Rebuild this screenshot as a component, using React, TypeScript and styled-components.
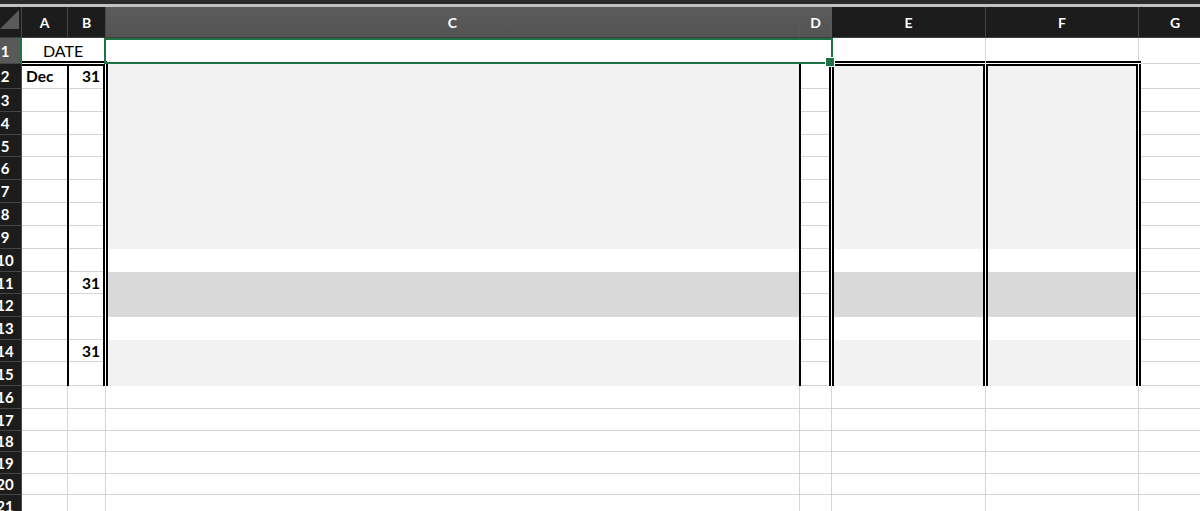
import React from 'react';
import styled, { createGlobalStyle, css } from 'styled-components';

const GRID = '#d4d4d4';
const LIGHT = '#f2f2f2';
const DARK = '#d9d9d9';
const GREEN = '#1f7246';

type Edge = 'none' | 'single' | 'double';

const GlobalStyle = createGlobalStyle`
  html, body { margin: 0; padding: 0; background: #fff; overflow: hidden; }
  body { font-family: Lato, "Open Sans", "Liberation Sans", sans-serif; }
`;

const Sheet = styled.div`
  width: 1200px;
  height: 511px;
  overflow: hidden;
  display: flex;
  flex-direction: column;
`;

const TopStrip = styled.div`
  flex: 0 0 7px;
  height: 7px;
  box-sizing: border-box;
  background: #2a2a2a;
  border-bottom: 3px solid #c2c2c2;
`;

const HeaderRow = styled.div`
  display: flex;
  flex: 0 0 31px;
  height: 31px;
  box-sizing: border-box;
  background: #1c1c1c;
  border-bottom: 1px solid #3e3e3e;
`;

const Corner = styled.div`
  flex: 0 0 22px;
  box-sizing: border-box;
  border-right: 1px solid #474747;
  display: flex;
  align-items: flex-end;
  justify-content: flex-end;
  padding: 0 2px 8px 0;
`;

const ColHeader = styled.div<{ $w: number; $sel?: boolean }>`
  flex: 0 0 ${(p) => p.$w}px;
  box-sizing: border-box;
  height: 100%;
  display: flex;
  align-items: center;
  justify-content: center;
  color: #fff;
  font-weight: 700;
  font-size: 14px;
  background: ${(p) => (p.$sel ? 'linear-gradient(#5b5b5b, #545454)' : 'transparent')};
  border-right: 1px solid ${(p) => (p.$sel ? '#5a5a5a' : '#474747')};
`;

const Row = styled.div<{ $h: number }>`
  display: flex;
  flex: 0 0 ${(p) => p.$h}px;
  height: ${(p) => p.$h}px;
`;

const RowHead = styled.div<{ $sel?: boolean }>`
  flex: 0 0 22px;
  box-sizing: border-box;
  overflow: hidden;
  display: flex;
  align-items: center;
  background: ${(p) => (p.$sel ? '#595959' : '#1c1c1c')};
  border-bottom: 1px solid #454545;
  border-right: ${(p) => (p.$sel ? `2px solid ${GREEN}` : '1px solid #4a4a4a')};
  color: #fff;
  font-weight: 700;
  font-size: 15px;
`;

const RowNum = styled.span`
  flex: 0 0 30px;
  margin-left: -10px;
  text-align: center;
`;

const vEdge = (e?: Edge) => {
  if (e === 'single')
    return css`
      &::after {
        content: '';
        position: absolute;
        z-index: 1;
        top: 0;
        bottom: -1px;
        right: -2px;
        width: 2px;
        background: #000;
      }
    `;
  if (e === 'double')
    return css`
      &::after {
        content: '';
        position: absolute;
        z-index: 1;
        top: 0;
        bottom: -1px;
        right: -3px;
        width: 5px;
        box-sizing: border-box;
        border-left: 2px solid #000;
        border-right: 2px solid #000;
        background: #fff;
      }
    `;
  return css``;
};

const hEdge = (e?: Edge, l = 0, r = 0) => {
  if (e === 'double')
    return css`
      &::before {
        content: '';
        position: absolute;
        z-index: 1;
        left: ${l}px;
        right: ${r}px;
        bottom: -3px;
        height: 5px;
        box-sizing: border-box;
        border-top: 2px solid #000;
        border-bottom: 2px solid #000;
        background: #fff;
      }
    `;
  return css``;
};

const Cell = styled.div<{
  $w: number;
  $fill?: string;
  $right?: Edge;
  $bottom?: Edge;
  $hl?: number;
  $hr?: number;
  $align?: 'left' | 'right' | 'center';
  $bold?: boolean;
}>`
  position: relative;
  box-sizing: border-box;
  flex: 0 0 ${(p) => p.$w}px;
  height: 100%;
  display: flex;
  align-items: center;
  justify-content: ${(p) =>
    p.$align === 'right' ? 'flex-end' : p.$align === 'center' ? 'center' : 'flex-start'};
  padding: 0 5px 0 4px;
  background: ${(p) => p.$fill ?? '#fff'};
  border-right: 1px solid ${(p) => p.$fill ?? GRID};
  border-bottom: 1px solid ${(p) => p.$fill ?? GRID};
  color: #000;
  font-size: ${(p) => (p.$bold ? '15.5px' : '16px')};
  font-weight: ${(p) => (p.$bold ? 700 : 400)};
  white-space: nowrap;
  ${(p) => vEdge(p.$right)}
  ${(p) => hEdge(p.$bottom, p.$hl, p.$hr)}
`;

const Selection = styled.div`
  position: absolute;
  z-index: 2;
  top: 0;
  left: -2px;
  right: -2px;
  bottom: -1px;
  border: 2px solid ${GREEN};
  pointer-events: none;
`;

const Handle = styled.div`
  position: absolute;
  right: -4px;
  bottom: -5px;
  width: 8px;
  height: 8px;
  background: ${GREEN};
  border: 1px solid #fff;
`;

const W = { A: 46, B: 38, C: 694, D: 32, E: 154, F: 153, G: 73 };
const COLS: Array<keyof typeof W> = ['A', 'B', 'C', 'D', 'E', 'F', 'G'];
const ROW_H = [26, 25, 23, 23, 22, 23, 23, 23, 23, 23, 22, 23, 23, 22, 24, 23, 22, 21, 22, 21, 22];

const fillFor = (r: number): string => {
  if (r <= 9) return LIGHT;
  if (r === 10 || r === 13) return '#fff';
  if (r <= 12) return DARK;
  return LIGHT;
};

const Triangle = () => (
  <svg width="19" height="19" viewBox="0 0 19 19">
    <polygon points="19,0 19,19 0,19" fill="#5a5a5a" />
  </svg>
);

const FirstRow = () => (
  <Row $h={ROW_H[0]}>
    <RowHead $sel>
      <RowNum>1</RowNum>
    </RowHead>
    <Cell $w={W.A + W.B} $align="center" $bottom="double" $hr={-2}>
      DATE
    </Cell>
    <Cell $w={W.C + W.D}>
      <Selection>
        <Handle />
      </Selection>
    </Cell>
    <Cell $w={W.E} $bottom="double" $hl={-4} />
    <Cell $w={W.F} $bottom="double" $hr={-3} />
    <Cell $w={W.G} />
  </Row>
);

const dayRows = new Set([2, 11, 14]);

const FramedRow = ({ r, h }: { r: number; h: number }) => {
  const fill = fillFor(r);
  return (
    <Row $h={h}>
      <RowHead>
        <RowNum>{r}</RowNum>
      </RowHead>
      <Cell $w={W.A} $right="single" $bold>
        {r === 2 ? 'Dec' : ''}
      </Cell>
      <Cell $w={W.B} $right="double" $align="right" $bold>
        {dayRows.has(r) ? '31' : ''}
      </Cell>
      <Cell $w={W.C} $fill={fill} $right="single" />
      <Cell $w={W.D} $right="double" />
      <Cell $w={W.E} $fill={fill} $right="double" />
      <Cell $w={W.F} $fill={fill} $right="double" />
      <Cell $w={W.G} />
    </Row>
  );
};

const PlainRow = ({ r, h }: { r: number; h: number }) => (
  <Row $h={h}>
    <RowHead>
      <RowNum>{r}</RowNum>
    </RowHead>
    {COLS.map((c) => (
      <Cell key={c} $w={W[c]} />
    ))}
  </Row>
);

export default function App() {
  return (
    <>
      <GlobalStyle />
      <Sheet>
        <TopStrip />
        <HeaderRow>
          <Corner>
            <Triangle />
          </Corner>
          {COLS.map((c) => (
            <ColHeader key={c} $w={W[c]} $sel={c === 'C' || c === 'D'}>
              {c}
            </ColHeader>
          ))}
        </HeaderRow>
        <FirstRow />
        {ROW_H.slice(1).map((h, i) => {
          const r = i + 2;
          return r <= 15 ? <FramedRow key={r} r={r} h={h} /> : <PlainRow key={r} r={r} h={h} />;
        })}
      </Sheet>
    </>
  );
}
